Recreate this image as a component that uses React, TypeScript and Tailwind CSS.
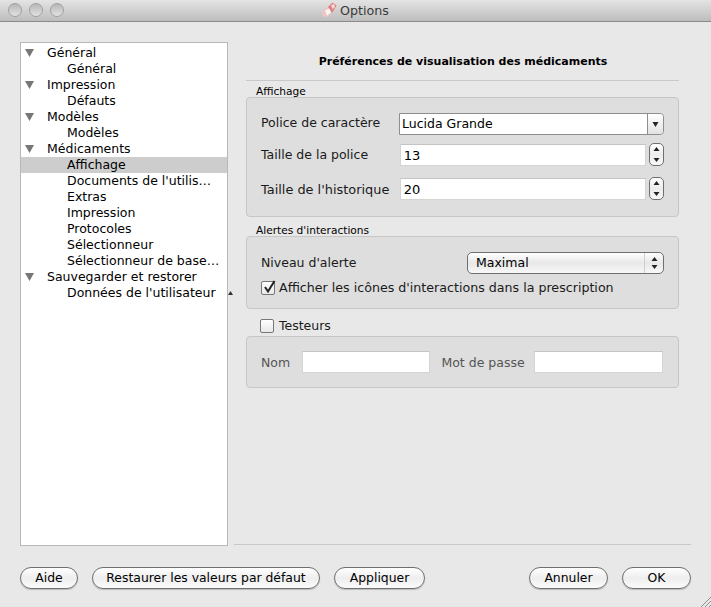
import React from 'react';

const tree: { label: string; children: string[] }[] = [
  { label: 'Général', children: ['Général'] },
  { label: 'Impression', children: ['Défauts'] },
  { label: 'Modèles', children: ['Modèles'] },
  {
    label: 'Médicaments',
    children: [
      'Affichage',
      "Documents de l'utilis…",
      'Extras',
      'Impression',
      'Protocoles',
      'Sélectionneur',
      'Sélectionneur de base…',
    ],
  },
  { label: 'Sauvegarder et restorer', children: ["Données de l'utilisateur"] },
];

function TrafficLight() {
  return (
    <div className="w-[14px] h-[14px] rounded-full border border-[#a0a0a0] bg-gradient-to-b from-[#b8b8b8] to-[#e2e2e2]" />
  );
}

function PillIcon() {
  return (
    <svg width="16" height="16" viewBox="0 0 16 16" className="mr-[3px]">
      <path d="M0.5 9.5 L7 5 L11 11 L5 15.5 Q3 15.5 1.5 13 Z" fill="#edc3c3" />
      <path d="M7 5 L11.5 0.5 L15.5 3.5 L11 11 Z" fill="#df7f7f" />
      <path d="M4 8.5 L8.5 6.5 L10 10.5 L6 13.5 Z" fill="#f8f4f4" />
      <path d="M10 3 L13 2 L14 5 L11.5 7 Z" fill="#f3dcdc" />
    </svg>
  );
}

function MacButton({ width, children }: { width: string; children: React.ReactNode }) {
  return (
    <button
      className={`${width} h-[22px] rounded-full border border-[#6f6f6f] bg-gradient-to-b from-white via-[#eeeeee] to-[#fbfbfb] text-[12.4px] leading-[20px] text-black shadow-[0_1px_1px_rgba(0,0,0,0.2)]`}
    >
      {children}
    </button>
  );
}

function Arrows() {
  return (
    <svg width="7" height="14" viewBox="0 0 7 14">
      <path d="M3.5 1 L6.5 5 L0.5 5 Z" fill="#222" />
      <path d="M3.5 13 L6.5 9 L0.5 9 Z" fill="#222" />
    </svg>
  );
}

function Spinner() {
  return (
    <div className="w-[15px] h-[23px] flex items-center justify-center rounded-[5px] border border-[#6f6f6f] bg-gradient-to-b from-white via-[#ececec] to-[#f8f8f8]">
      <svg width="7" height="17" viewBox="0 0 7 17">
        <path d="M3.5 1 L6.5 5 L0.5 5 Z" fill="#222" />
        <path d="M3.5 16 L6.5 12 L0.5 12 Z" fill="#222" />
      </svg>
    </div>
  );
}

function TextField({ value, width }: { value?: string; width: string }) {
  return (
    <div
      className={`${width} h-[22px] bg-white border border-[#d4d4d4] border-t-[#c4c4c4] pl-[3px] text-[13px] leading-[21px] text-black`}
    >
      {value}
    </div>
  );
}

export default function App() {
  return (
    <div className="w-[711px] h-[607px] flex flex-col overflow-hidden bg-[#e8e8e8] text-[12.5px] text-[#1a1a1a] font-['DejaVu_Sans',sans-serif]">
      {/* Title bar */}
      <div className="relative h-[22px] shrink-0 flex items-center border-b border-[#8c8c8c] bg-gradient-to-b from-[#e4e4e4] to-[#bdbdbd]">
        <div className="flex gap-[7px] pl-[8px] -mt-[1px]">
          <TrafficLight />
          <TrafficLight />
          <TrafficLight />
        </div>
        <div className="flex items-center ml-[257px] text-[#3a3a3a] text-[12.7px]">
          <PillIcon />
          Options
        </div>
      </div>

      <div className="flex pl-[20px] pr-[20px] pt-[20px] h-[503px]">
        {/* Tree */}
        <div className="w-[208px] h-[504px] shrink-0 bg-white border border-[#b8b8b8] pt-[2px] text-[12.5px] leading-[16px] text-black">
          {tree.map((group) => (
            <div key={group.label}>
              <div className="flex items-center h-[16px]">
                <svg width="9" height="8" viewBox="0 0 9 8" className="ml-[4px] mr-[13px]">
                  <path d="M0 0 L9 0 L4.5 8 Z" fill="#777" />
                </svg>
                {group.label}
              </div>
              {group.children.map((child) => (
                <div
                  key={child}
                  className={`h-[16px] pl-[46px] whitespace-nowrap ${child === 'Affichage' ? 'bg-[#cdcdcd]' : ''}`}
                >
                  {child}
                </div>
              ))}
            </div>
          ))}
        </div>

        {/* Splitter handle */}
        <div className="w-[6px] shrink-0 flex flex-col items-start pt-[249px]">
          <svg width="5" height="4" viewBox="0 0 5 4">
            <path d="M2.5 0 L5 4 L0 4 Z" fill="#333" />
          </svg>
        </div>

        {/* Settings panel */}
        <div className="w-[457px] shrink-0 flex flex-col">
          <div className="mx-[12px] h-[39px] border-b border-[#c8c8c8] text-center pl-[1px] pt-[10px]">
            <span className="font-bold text-[11px] leading-[18px] text-black">
              Préférences de visualisation des médicaments
            </span>
          </div>

          <div className="mx-[12px]">
            <div className="pl-[10px] h-[12px] mt-[4px] text-[10.6px] leading-[13px] text-black">Affichage</div>
            <div className="h-[120px] rounded-[4px] border border-[#c6c6c6] bg-[#dedede] pl-[14px] pr-[14px] pt-[15px]">
              <div className="flex items-center h-[22px]">
                <div className="w-[138px] -mt-[2px]">Police de caractère</div>
                <div className="w-[265px] h-[22px] flex border border-[#8e8e8e] rounded-r-[4px] bg-white">
                  <div className="flex-1 pl-[2px] leading-[20px] text-black">Lucida Grande</div>
                  <div className="w-[16px] flex items-center justify-center border-l border-[#8e8e8e] rounded-r-[4px] bg-gradient-to-b from-white to-[#e2e2e2]">
                    <svg width="7" height="5" viewBox="0 0 7 5">
                      <path d="M0.5 0 L6.5 0 L3.5 5 Z" fill="#222" />
                    </svg>
                  </div>
                </div>
              </div>
              <div className="flex items-center h-[23px] mt-[8px]">
                <div className="w-[139px] mt-[2px]">Taille de la police</div>
                <TextField value="13" width="w-[247px]" />
                <div className="ml-[3px]">
                  <Spinner />
                </div>
              </div>
              <div className="flex items-center h-[23px] mt-[11px]">
                <div className="w-[139px] mt-[2px] text-[12.9px] whitespace-nowrap">Taille de l'historique</div>
                <TextField value="20" width="w-[247px]" />
                <div className="ml-[3px]">
                  <Spinner />
                </div>
              </div>
            </div>

            <div className="pl-[10px] h-[12px] mt-[7px] text-[10.6px] leading-[13px] text-black">Alertes d'interactions</div>
            <div className="h-[73px] rounded-[4px] border border-[#c6c6c6] bg-[#dedede] pl-[14px] pr-[14px] pt-[15px]">
              <div className="flex items-center justify-between h-[22px]">
                <div>Niveau d'alerte</div>
                <div className="w-[197px] h-[22px] flex items-center rounded-[5px] border border-[#6f6f6f] bg-gradient-to-b from-white via-[#e8e8e8] to-[#f8f8f8] text-black">
                  <div className="flex-1 pl-[8px]">Maximal</div>
                  <div className="w-[19px] h-full flex items-center justify-center border-l border-[#cfcfcf]">
                    <Arrows />
                  </div>
                </div>
              </div>
              <div className="flex items-center mt-[6px] h-[16px] text-[12.65px]">
                <div className="relative w-[14px] h-[14px] rounded-[2px] border border-[#777] bg-gradient-to-b from-white to-[#e8e8e8] mr-[4px]">
                  <svg width="15" height="15" viewBox="0 0 15 15" className="absolute -top-[3px] left-0">
                    <path d="M3 8 L6 12.5 L12.5 2" fill="none" stroke="#222" strokeWidth="2" />
                  </svg>
                </div>
                <span className="mt-[1px]">Afficher les icônes d'interactions dans la prescription</span>
              </div>
            </div>

            <div className="flex items-center h-[16px] mt-[9px] pl-[14px]">
              <div className="w-[14px] h-[14px] rounded-[2px] border border-[#777] bg-gradient-to-b from-white to-[#e8e8e8] mr-[5px]" />
              Testeurs
            </div>
            <div className="h-[52px] mt-[2px] rounded-[4px] border border-[#c6c6c6] bg-[#dedede] pl-[14px] pr-[15px] pt-[14px] flex items-start text-[#555]">
              <div className="w-[41px] leading-[23px]">Nom</div>
              <TextField width="w-[129px]" />
              <div className="w-[93px] pl-[11px] shrink-0 whitespace-nowrap leading-[23px]">Mot de passe</div>
              <TextField width="w-[129px] ml-[11px]" />
            </div>
          </div>
        </div>
      </div>

      {/* Footer */}
      <div className="relative flex-1 flex flex-col">
        <div className="ml-[234px] mt-[19px] w-[457px] border-t border-[#c8c8c8]" />
        <div className="flex items-center px-[20px] pt-[22px]">
          <MacButton width="w-[58px]">Aide</MacButton>
          <div className="w-[14px]" />
          <MacButton width="w-[228px]">Restaurer les valeurs par défaut</MacButton>
          <div className="w-[14px]" />
          <MacButton width="w-[91px]">Appliquer</MacButton>
          <div className="flex-1" />
          <MacButton width="w-[79px]">Annuler</MacButton>
          <div className="w-[14px]" />
          <MacButton width="w-[69px]">OK</MacButton>
        </div>
        <svg width="11" height="11" viewBox="0 0 11 11" className="absolute right-0 bottom-0">
          <path d="M1 11 L11 1 M5 11 L11 5 M9 11 L11 9" stroke="#8f8f8f" strokeWidth="1" />
        </svg>
      </div>
    </div>
  );
}
